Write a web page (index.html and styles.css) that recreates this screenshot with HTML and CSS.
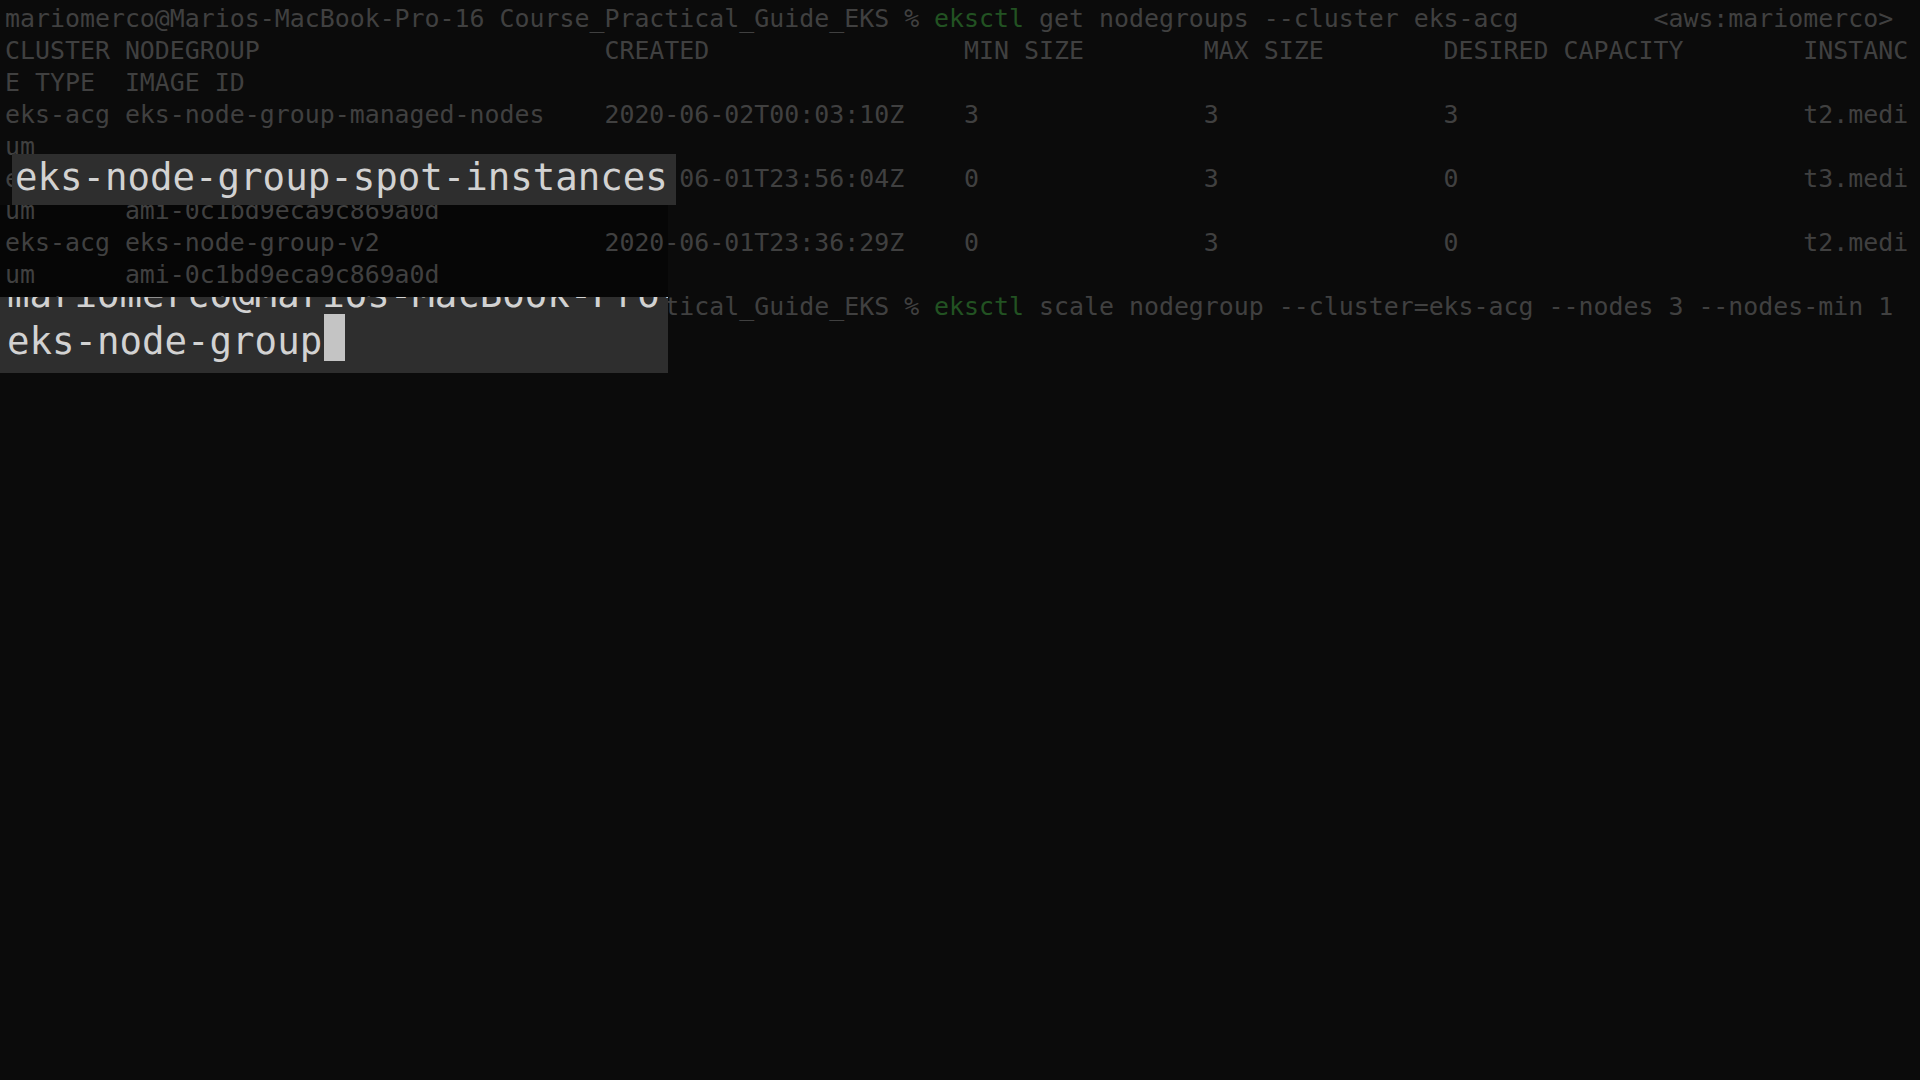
FILE: index.html
```html
<!DOCTYPE html>
<html lang="en">
<head>
<meta charset="utf-8">
<title>Terminal</title>
<link rel="stylesheet" href="styles.css">
</head>
<body>
<main class="screen">
<div class="shade"></div>
<pre class="term">mariomerco@Marios-MacBook-Pro-16 Course_Practical_Guide_EKS % <span class="cmd">eksctl</span> get nodegroups --cluster eks-acg         &lt;aws:mariomerco&gt;
CLUSTER NODEGROUP                       CREATED                 MIN SIZE        MAX SIZE        DESIRED CAPACITY        INSTANC
E TYPE  IMAGE ID
eks-acg eks-node-group-managed-nodes    2020-06-02T00:03:10Z    3               3               3                       t2.medi
um
eks-acg eks-node-group-spot-instances   2020-06-01T23:56:04Z    0               3               0                       t3.medi
um      ami-0c1bd9eca9c869a0d
eks-acg eks-node-group-v2               2020-06-01T23:36:29Z    0               3               0                       t2.medi
um      ami-0c1bd9eca9c869a0d
mariomerco@Marios-MacBook-Pro-16 Course_Practical_Guide_EKS % <span class="cmd">eksctl</span> scale nodegroup --cluster=eks-acg --nodes 3 --nodes-min 1
 --nodes-max 3 --name eks-node-group</pre>
<div class="zoom zoom-one">eks-node-group-spot-instances</div>
<div class="zoom zoom-two"><div class="zoom-lines">mariomerco@Marios-MacBook-Pro-16 Course_Practical_Guide_EKS
eks-node-group<span class="cursor"></span></div></div>
</main>
</body>
</html>
```
FILE: styles.css
```css
html, body {
  margin: 0;
  padding: 0;
  background: #0b0b0b;
}
.screen {
  position: relative;
  width: 1920px;
  height: 1080px;
  overflow: hidden;
  background: #0b0b0b;
}
.term {
  position: relative;
  z-index: 1;
  margin: 0;
  padding: 3px 0 0 5px;
  font-family: "DejaVu Sans Mono", "Liberation Mono", monospace;
  font-size: 24.9px;
  line-height: 32px;
  color: #404040;
  white-space: pre;
}
.cmd {
  color: #225222;
}
.shade {
  position: absolute;
  z-index: 0;
  left: 0;
  top: 205px;
  width: 668px;
  height: 92px;
  background: #060606;
}
.zoom {
  position: absolute;
  z-index: 2;
  background: #2e2e2e;
  color: #d2d2d2;
  font-family: "DejaVu Sans Mono", "Liberation Mono", monospace;
  font-size: 37.4px;
}
.zoom-one {
  left: 12px;
  top: 154px;
  width: 664px;
  box-sizing: border-box;
  padding: 0 0 5px 3px;
  line-height: 46px;
  white-space: pre;
}
.zoom-two {
  left: 0;
  top: 297px;
  width: 668px;
  height: 76px;
  overflow: hidden;
}
.zoom-lines {
  margin-top: -23px;
  padding-left: 7px;
  line-height: 40px;
  white-space: pre;
}
.cursor {
  display: inline-block;
  width: 21px;
  height: 47px;
  margin-left: 2px;
  vertical-align: -7px;
  background: #c4c4c4;
}
```
